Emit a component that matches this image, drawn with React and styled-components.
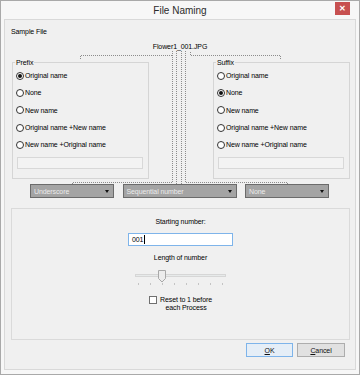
import React from "react"
import styled, { createGlobalStyle } from "styled-components"

const GlobalStyle = createGlobalStyle`
  html, body {
    margin: 0;
    padding: 0;
    background: #ffffff;
  }
  body {
    font-family: "Liberation Sans", Arial, sans-serif;
    color: #000000;
  }
  * {
    box-sizing: border-box;
  }
`

const Window = styled.div`
  width: 360px;
  height: 375px;
  border: 1px solid #a9a9a9;
  background: #f7f7f7;
  padding: 0 3px 4px 3px;
  display: flex;
  flex-direction: column;
`

const TitleBar = styled.div`
  height: 18px;
  display: grid;
  grid-template-columns: 1fr auto 1fr;
  align-items: center;
`

const Title = styled.div`
  grid-column: 2;
  font-size: 10px;
  color: #2b2b2b;
`

const CloseButton = styled.div`
  grid-column: 3;
  justify-self: end;
  align-self: start;
  margin: 1px 6px 0 0;
  width: 15px;
  height: 13px;
  background: #c75050;
  color: #ffffff;
  font-size: 8px;
  font-weight: 700;
  display: flex;
  align-items: center;
  justify-content: center;
`

const Client = styled.div`
  flex: 1;
  border: 1px solid #d9d9d9;
  background: #f0f0f0;
  display: flex;
  flex-direction: column;
  font-size: 7px;
  letter-spacing: -0.1px;
  line-height: 9px;
`

const SampleLabel = styled.div`
  margin: 7px 0 0 6px;
`

const MapArea = styled.div`
  position: relative;
  margin-top: 6px;
`

const FileName = styled.div`
  text-align: center;
  height: 9px;
`

const Connectors = styled.svg`
  position: absolute;
  left: 0;
  top: 0;
  pointer-events: none;
`

const GroupsRow = styled.div`
  display: flex;
  justify-content: space-between;
  margin-top: 7px;
  padding: 0 5px 0 7px;
`

const Group = styled.fieldset`
  width: 137px;
  min-width: 0;
  margin: 0;
  border: 1px solid #d5d5d5;
  padding: 0 3px 9px 3px;
`

const Legend = styled.legend`
  padding: 0 1px;
  margin-left: -1px;
  line-height: 9px;
`

const RadioRow = styled.div`
  height: 17.33px;
  display: flex;
  align-items: center;
  gap: 1px;
`

const RadioCircle = styled.span`
  width: 8px;
  height: 8px;
  border-radius: 50%;
  border: 1px solid #333333;
  background: #ffffff;
  display: flex;
  align-items: center;
  justify-content: center;
  flex-shrink: 0;
  &::after {
    content: "";
    width: 4px;
    height: 4px;
    border-radius: 50%;
    background: ${props => (props.checked ? "#111111" : "transparent")};
  }
`

const DisabledField = styled.div`
  margin: 3.4px 2px 0 1px;
  height: 12px;
  border: 1px solid #d8d8d8;
  background: #f3f3f3;
`

const ComboRow = styled.div`
  display: flex;
  gap: 8.5px;
  margin-top: 5px;
  padding-left: 25px;
`

const Combo = styled.div`
  width: ${props => props.width}px;
  height: 14px;
  background: #a4a4a4;
  border: 1px solid #6b6b6b;
  color: #ececec;
  padding: 0 4px 0 3px;
  display: flex;
  align-items: center;
  justify-content: space-between;
`

const Arrow = styled.span`
  width: 0;
  height: 0;
  border-left: 2.5px solid transparent;
  border-right: 2.5px solid transparent;
  border-top: 3px solid #111111;
`

const StartGroup = styled.div`
  margin: 10px 5px 0 6px;
  height: 132px;
  border: 1px solid #dadada;
  display: flex;
  flex-direction: column;
  align-items: center;
  padding-top: 8px;
`

const NumberField = styled.div`
  margin-top: 7px;
  width: 105px;
  height: 13px;
  border: 1px solid #7eb4ea;
  background: #ffffff;
  padding-left: 3px;
  display: flex;
  align-items: center;
  color: #000000;
`

const Caret = styled.span`
  width: 1px;
  height: 9px;
  background: #000000;
  margin-left: 0.5px;
`

const SliderCaption = styled.div`
  margin-top: 7px;
`

const Slider = styled.svg`
  margin-top: 4px;
  display: block;
`

const CheckRow = styled.div`
  margin-top: 10px;
  display: flex;
  align-items: flex-start;
  gap: 3px;
`

const CheckBox = styled.span`
  width: 8px;
  height: 8px;
  border: 1px solid #707070;
  background: #ffffff;
  flex-shrink: 0;
`

const CheckLabel = styled.div`
  text-align: center;
  line-height: 8px;
`

const ButtonRow = styled.div`
  display: flex;
  justify-content: flex-end;
  gap: 4px;
  margin-top: 3px;
  padding-right: 10px;
`

const Button = styled.div`
  width: ${props => props.width}px;
  height: 14px;
  border: 1px solid ${props => (props.primary ? "#7eb4ea" : "#adadad")};
  background: ${props => (props.primary ? "#e5eef7" : "#e1e1e1")};
  display: flex;
  align-items: center;
  justify-content: center;
  color: #111111;
`

const nameOptions = [
  "Original name",
  "None",
  "New name",
  "Original name +New name",
  "New name +Original name",
]

const NameGroup = ({ title, selected }) => (
  <Group>
    <Legend>{title}</Legend>
    {nameOptions.map((label, i) => (
      <RadioRow key={label}>
        <RadioCircle checked={i === selected} />
        <span>{label}</span>
      </RadioRow>
    ))}
    <DisabledField />
  </Group>
)

const ticks = [5, 17, 29, 41, 53, 65, 77, 89]

export default function App() {
  return (
    <>
      <GlobalStyle />
      <Window>
        <TitleBar>
          <Title>File Naming</Title>
          <CloseButton>✕</CloseButton>
        </TitleBar>
        <Client>
          <SampleLabel>Sample File</SampleLabel>
          <MapArea>
            <FileName>Flower1_001.JPG</FileName>
            <GroupsRow>
              <NameGroup title="Prefix" selected={0} />
              <NameGroup title="Suffix" selected={1} />
            </GroupsRow>
            <ComboRow>
              <Combo width={84}>
                <span>Underscore</span>
                <Arrow />
              </Combo>
              <Combo width={114}>
                <span>Sequential number</span>
                <Arrow />
              </Combo>
              <Combo width={84}>
                <span>None</span>
                <Arrow />
              </Combo>
            </ComboRow>
            <Connectors width="350" height="145">
              <g fill="none" stroke="#8c8c8c" strokeWidth="1" strokeDasharray="1 1">
                <path d="M75.5 17 V13.5 H167.5" />
                <path d="M167.5 9 V140.5 H67.5 V142" />
                <path d="M171.5 9 V142" />
                <path d="M176.5 9 V142" />
                <path d="M180.5 9 V140.5 H282.5 V142" />
                <path d="M185.5 10 V13.5 H275.5 V17" />
              </g>
            </Connectors>
          </MapArea>
          <StartGroup>
            <div>Starting number:</div>
            <NumberField>
              001
              <Caret />
            </NumberField>
            <SliderCaption>Length of number</SliderCaption>
            <Slider width="95" height="20" viewBox="0 0 95 20">
              <rect x="2.5" y="8.5" width="90" height="2" fill="#e7eaea" stroke="#d6d6d6" />
              <path
                d="M25.5 4.5 H32.5 V12.5 L29 16 L25.5 12.5 Z"
                fill="#ececec"
                stroke="#a8a8a8"
              />
              {ticks.map(x => (
                <line key={x} x1={x + 0.5} x2={x + 0.5} y1="17" y2="19" stroke="#c4c4c4" />
              ))}
            </Slider>
            <CheckRow>
              <CheckBox />
              <CheckLabel>
                Reset to 1 before
                <br />
                each Process
              </CheckLabel>
            </CheckRow>
          </StartGroup>
          <ButtonRow>
            <Button width={47} primary>
              <span>
                <u>O</u>K
              </span>
            </Button>
            <Button width={48}>
              <span>
                <u>C</u>ancel
              </span>
            </Button>
          </ButtonRow>
        </Client>
      </Window>
    </>
  )
}
